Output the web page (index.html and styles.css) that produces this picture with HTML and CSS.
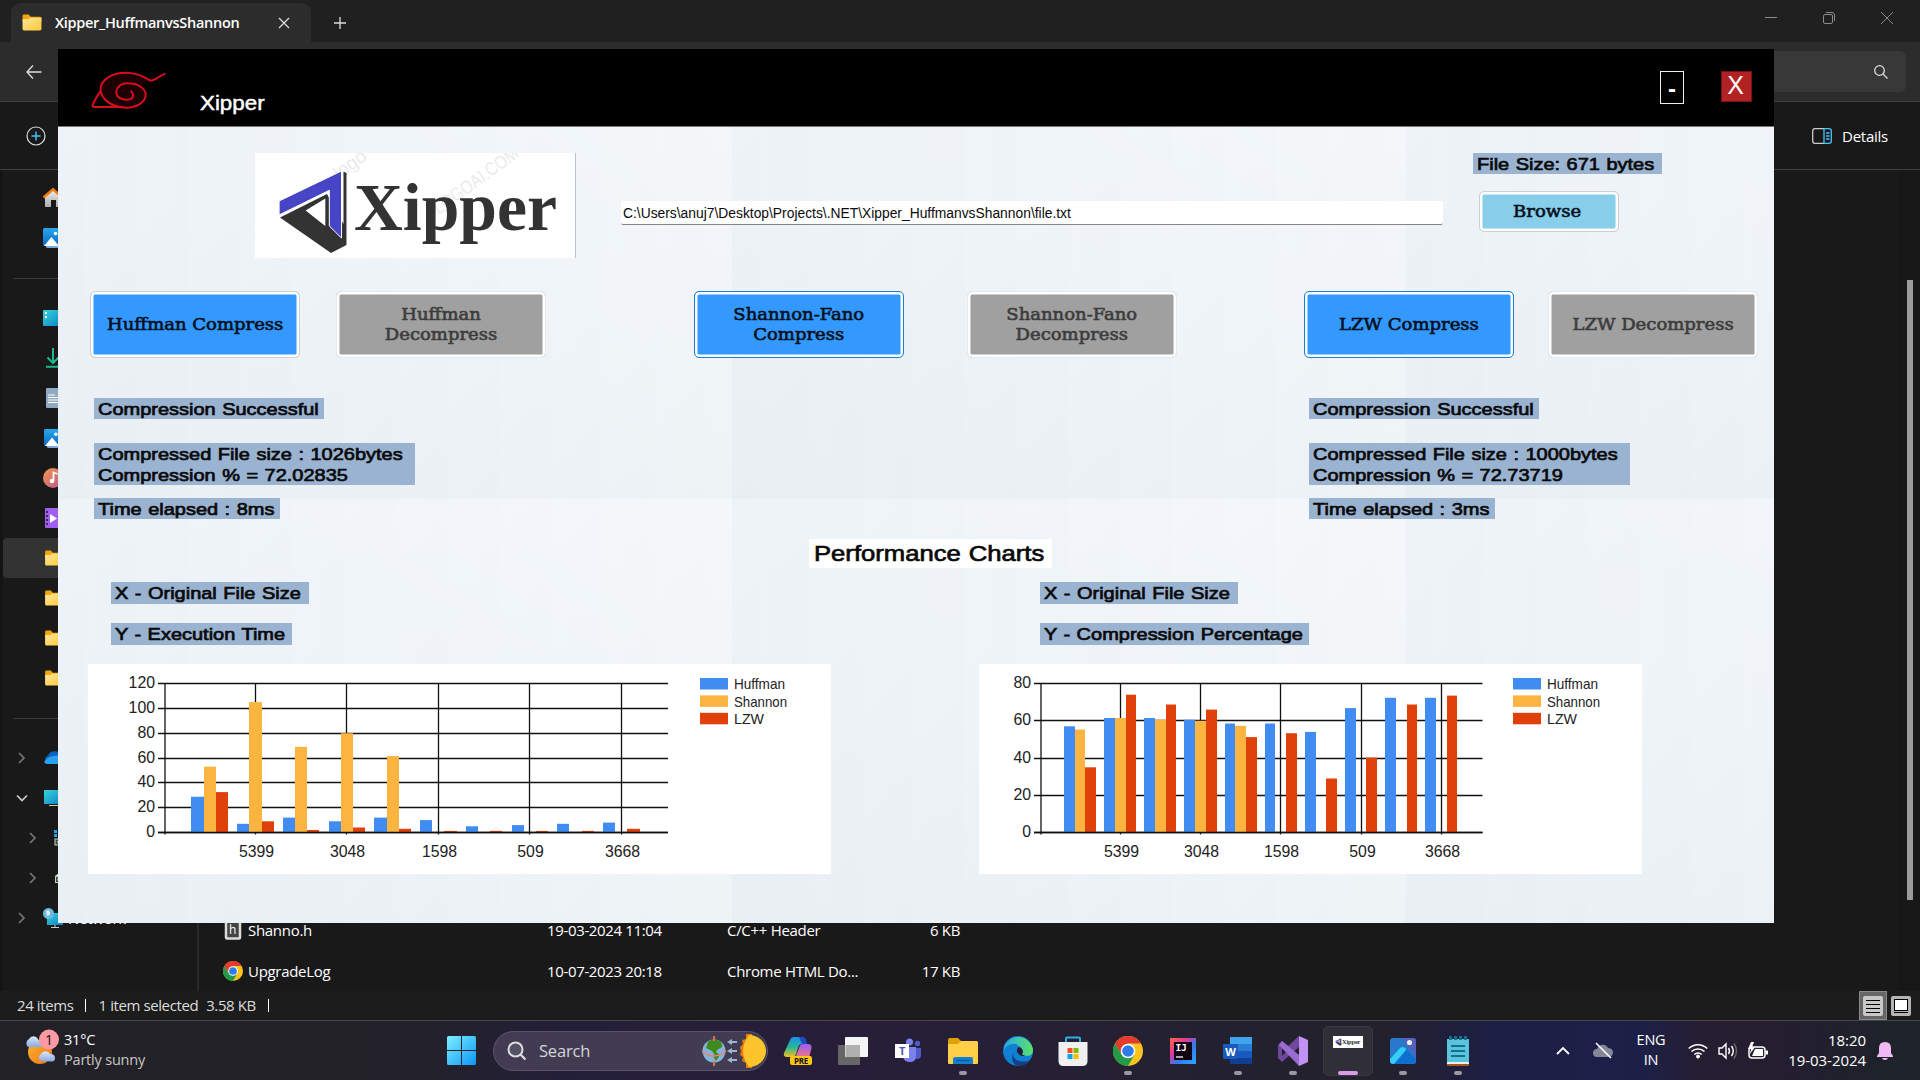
FILE: index.html
```html
<!DOCTYPE html>
<html lang="en">
<head>
<meta charset="utf-8">
<title>Xipper</title>
<link rel="stylesheet" href="styles.css">
</head>
<body>
<svg class="defs" width="0" height="0">
  <defs>
    <linearGradient id="gFolder" x1="0" y1="0" x2="1" y2="1"><stop offset="0" stop-color="#ffe69c"/><stop offset="1" stop-color="#ffc935"/></linearGradient>
    <linearGradient id="gTeal" x1="0" y1="0" x2="1" y2="1"><stop offset="0" stop-color="#35d3dc"/><stop offset="1" stop-color="#0f7fc4"/></linearGradient>
    <linearGradient id="gBlue" x1="0" y1="0" x2="0" y2="1"><stop offset="0" stop-color="#29a7ee"/><stop offset="1" stop-color="#0b69c0"/></linearGradient>
    <linearGradient id="gWin" x1="0" y1="0" x2="1" y2="1"><stop offset="0" stop-color="#7df0ff"/><stop offset="1" stop-color="#0a96f5"/></linearGradient>
    <linearGradient id="gEdge" x1="0" y1="0" x2="1" y2="0"><stop offset="0" stop-color="#2aa8e8"/><stop offset="1" stop-color="#5be36a"/></linearGradient>
    <linearGradient id="gCopA" x1="0" y1="0" x2="0" y2="1"><stop offset="0" stop-color="#1d8fe8"/><stop offset=".5" stop-color="#25b59b"/><stop offset="1" stop-color="#f2c21a"/></linearGradient>
    <linearGradient id="gCopB" x1="0" y1="0" x2="0" y2="1"><stop offset="0" stop-color="#9a5cf5"/><stop offset="1" stop-color="#f2777a"/></linearGradient>
    <linearGradient id="gIJ" x1="0" y1="0" x2="1" y2="1"><stop offset="0" stop-color="#fc6a3a"/><stop offset=".35" stop-color="#e0379b"/><stop offset=".6" stop-color="#2f7cf0"/><stop offset="1" stop-color="#2fa5ff"/></linearGradient>
    <linearGradient id="gSun" x1="0" y1="0" x2="1" y2="1"><stop offset="0" stop-color="#f8b92b"/><stop offset="1" stop-color="#f0701c"/></linearGradient>
    <linearGradient id="gCloud" x1="0" y1="0" x2="0" y2="1"><stop offset="0" stop-color="#dfe9fb"/><stop offset="1" stop-color="#86a9e4"/></linearGradient>
    <linearGradient id="gHome" x1="0" y1="0" x2="0" y2="1"><stop offset="0" stop-color="#eee"/><stop offset="1" stop-color="#aaa"/></linearGradient>
    <linearGradient id="gMusic" x1="0" y1="0" x2="1" y2="1"><stop offset="0" stop-color="#f59b4c"/><stop offset="1" stop-color="#b8518f"/></linearGradient>
    <symbol id="folder" viewBox="0 0 20 18"><path d="M0 2q0-1.500 1.500-1.500h5l2 2.500h10q1.500 0 1.500 1.500V8H0z" fill="#f5a60f"/><path d="M0 5.500h6l2-1.500h12v12q0 1.500-1.500 1.500h-17Q0 17.500 0 16z" fill="url(#gFolder)"/></symbol>
    <symbol id="picture" viewBox="0 0 20 20"><rect x="3" y="16" width="17" height="4" rx="1.500" fill="#7aa9dc"/><rect width="20" height="18" rx="1.500" fill="url(#gBlue)"/><path d="M1 18l7.500-9L16 18z" fill="#fff"/><circle cx="12.500" cy="5.500" r="1.800" fill="#fff"/></symbol>
    <symbol id="chrome" viewBox="0 0 30 30"><circle cx="15" cy="15" r="15" fill="#fcc31e"/><path d="M2 7.500A15 15 0 0 1 28 7.500H15L8.500 18.700z" fill="#e33b2e"/><path d="M2 7.500A15 15 0 0 0 15 30l6.500-11.200L8.500 18.700z" fill="#229a48"/><circle cx="15" cy="15" r="7.300" fill="#fff"/><circle cx="15" cy="15" r="5.800" fill="#2f7bea"/></symbol>
    <symbol id="mark" viewBox="20 14 76 90"><path d="M88.500 18.500l3 1.500v72L76 100 25 64.500 72 41l16.500 30z" fill="#333"/><path d="M24.100 48L86.500 18v67L74.300 73V37.300L24.100 62z" fill="#4545c5" stroke="#fff" stroke-width="1"/><path d="M50.600 57.500L70.300 45.500V73z" fill="#fff"/></symbol>
    <symbol id="chevR" viewBox="0 0 12 12"><path d="M3 1l5 5-5 5" fill="none" stroke="#777" stroke-width="1.700"/></symbol>
  </defs>
</svg>

<div class="desktop">
  <section class="explorer">
    <div class="tabbar">
      <div class="tab">
        <svg width="20" height="17"><use href="#folder"/></svg>
        <span class="tab-title">Xipper_HuffmanvsShannon</span>
        <svg width="12" height="12" class="stroke"><path d="M1 1l10 10M11 1L1 11"/></svg>
      </div>
      <svg class="stroke newtab" width="14" height="14"><path d="M7 1v12M1 7h12"/></svg>
      <div class="winctl">
        <svg width="12" height="12"><path d="M0 5.500h12"/></svg>
        <svg width="12" height="12"><rect x=".5" y="2.500" width="9" height="9" rx="1.500"/><path d="M3 .5h6q2.500 0 2.500 2.500v6"/></svg>
        <svg width="12" height="12"><path d="M0 0l12 12M12 0L0 12"/></svg>
      </div>
    </div>
    <div class="navbar">
      <svg class="stroke" width="16" height="16"><path d="M15.500 8H1M7 1.500L1 8l6 6.500"/></svg>
      <div class="searchbox"><svg class="stroke" width="14" height="14"><circle cx="5.500" cy="5.500" r="4.800"/><path d="M9 9l4.500 4.500"/></svg></div>
    </div>
    <div class="cmdbar">
      <svg width="20" height="20"><circle cx="10" cy="10" r="9" fill="none" stroke="#ddd" stroke-width="1.200"/><path d="M10 5.500v9M5.500 10h9" stroke="#4cc2ff" stroke-width="1.400"/></svg>
      <div class="details">
        <svg width="20" height="16"><path d="M12 .7H3Q.7.700.7 3v10Q.7 15.300 3 15.300h9" fill="none" stroke="#ccc" stroke-width="1.300"/><path d="M12 .7h5q2.300 0 2.300 2.300v10q0 2.300-2.300 2.300h-5zM14 5h3.500M14 8h3.500M14 11h3.500" fill="none" stroke="#4cc2ff" stroke-width="1.300"/></svg>
        <span>Details</span>
      </div>
    </div>
    <div class="body">
      <nav class="side">
        <div class="row"><svg width="20" height="20"><path d="M2 9l8-7 8 7v10h-5v-7H8v7H2z" fill="url(#gHome)"/><path d="M.5 9.500L10 1.300l9.500 8.200" fill="none" stroke="#f07c10" stroke-width="2.600"/></svg></div>
        <div class="row"><svg width="20" height="20"><use href="#picture"/></svg></div>
        <div class="row sep"></div>
        <div class="row"><svg width="20" height="16"><rect width="20" height="16" rx="1" fill="url(#gTeal)"/><path d="M2 2h2v2H2zM2 6h2v2H2z" fill="#fff"/></svg></div>
        <div class="row"><svg width="20" height="20"><path d="M10 0v15M4.500 9.500L10 15l5.500-5.500M3 18.800h14" fill="none" stroke="#1fb88c" stroke-width="2"/></svg></div>
        <div class="row"><svg width="20" height="20"><rect x="3" width="17" height="20" rx="1" fill="#91a9c3"/><path d="M5 7h7M5 9.500h14M5 12h14M5 14.500h14" stroke="#fff" stroke-width="1.200"/></svg></div>
        <div class="row"><svg width="20" height="20"><g transform="translate(1 1)"><use href="#picture" width="19" height="19"/></g></svg></div>
        <div class="row"><svg width="20" height="20"><circle cx="10" cy="10" r="10" fill="url(#gMusic)"/><circle cx="9" cy="13" r="2.300" fill="#fff"/><path d="M10.500 13V4.500l4 1.500" fill="none" stroke="#fff" stroke-width="1.800"/></svg></div>
        <div class="row"><svg width="20" height="20"><rect x="2" width="18" height="20" rx="1" fill="#a05fee"/><path d="M3 3h2v2H3zM3 7h2v2H3zM3 11h2v2H3zM3 15h2v2H3z" fill="#402068"/><path d="M7 6l7 4.500L7 15z" fill="#fff"/></svg></div>
        <div class="row sel"><svg width="20" height="16"><use href="#folder" x="1"/></svg></div>
        <div class="row"><svg width="20" height="16"><use href="#folder" x="1"/></svg></div>
        <div class="row"><svg width="20" height="16"><use href="#folder" x="1"/></svg></div>
        <div class="row"><svg width="20" height="16"><use href="#folder" x="1"/></svg></div>
        <div class="row sep"></div>
        <div class="row"><svg class="chev" width="12" height="12"><use href="#chevR"/></svg><svg width="20" height="14"><path d="M4 13a5 5 0 0 1 1-8.500A7 7 0 0 1 18 5l2 8z" fill="#0a63c2"/><path d="M1 11q5-8 19-6v8H5q-3 0-4-2z" fill="#2aa0ee"/></svg></div>
        <div class="row"><svg class="chev" width="12" height="12"><path d="M1 3.500l5 5 5-5" fill="none" stroke="#ccc" stroke-width="1.700"/></svg><svg width="20" height="16"><rect x="1" width="19" height="14" fill="url(#gTeal)"/><path d="M6 15.500h10" stroke="#ccc"/></svg></div>
        <div class="row deep"><svg class="chev" width="12" height="12"><use href="#chevR"/></svg><svg width="20" height="18"><path d="M0 1h3v3H0zM4 1h3v3H4zM0 5h3v3H0zM4 5h3v3H4z" fill="#1fa5ef"/><rect x="1" y="10" width="18" height="6" fill="#444" stroke="#ccc"/><path d="M3 13h3" stroke="#4fd35a" stroke-width="2"/></svg></div>
        <div class="row deep"><svg class="chev" width="12" height="12"><use href="#chevR"/></svg><svg width="20" height="12"><path d="M1 4l4-3h10l4 3z" fill="#ddd"/><rect x="1.500" y="4.500" width="17" height="6" fill="#444" stroke="#ccc"/><path d="M3 7.500h3" stroke="#4fd35a" stroke-width="2"/></svg></div>
        <div class="row"><svg class="chev" width="12" height="12"><use href="#chevR"/></svg><svg width="20" height="20"><rect x="4" y="5" width="16" height="12" fill="url(#gTeal)"/><path d="M8 19.500h8M12 17v2" stroke="#ccc"/><circle cx="5.500" cy="5.500" r="5.500" fill="#6db9dc"/><path d="M3 3q3-2 4 1T4 8z" fill="#d5f0f8"/></svg><span class="net">Network</span></div>
      </nav>
      <div class="files">
        <div class="file"><svg width="20" height="20"><rect x="3" y=".5" width="14" height="18" rx="1" fill="#444" stroke="#ddd" stroke-width="2.500"/></svg><span class="hmark">h</span><span class="c1">Shanno.h</span><span class="c2">19-03-2024 11:04</span><span class="c3">C/C++ Header</span><span class="c4">6 KB</span></div>
        <div class="file"><svg width="20" height="20"><use href="#chrome"/></svg><span class="c1">UpgradeLog</span><span class="c2">10-07-2023 20:18</span><span class="c3">Chrome HTML Do...</span><span class="c4">17 KB</span></div>
      </div>
      <div class="scroll"><i></i></div>
    </div>
    <div class="status">
      <span>24 items</span><i></i><span>1 item selected</span><span class="kb">3.58 KB</span><i></i>
      <div class="views">
        <div class="view on"><svg width="20" height="20"><rect width="20" height="20" rx="2" fill="#c8c8c8"/><path d="M3 4.500h14M3 8.500h14M3 12.500h14M3 16.500h14" stroke="#000"/></svg></div>
        <svg width="20" height="20"><rect width="20" height="20" rx="2" fill="#b5b5b5"/><rect x="3.500" y="3.500" width="13" height="11" fill="#fff" stroke="#000"/><path d="M3 16.500h14" stroke="#000"/></svg>
      </div>
    </div>
  </section>

  <footer class="taskbar">
    <div class="weather">
      <svg width="34" height="38"><circle cx="15" cy="23" r="12" fill="url(#gSun)"/><path d="M3 18a5 5 0 0 1 1-8 5 5 0 0 1 9 0l4 8z" fill="url(#gCloud)"/><path d="M16 32a4 4 0 0 1 0-7 5 5 0 0 1 9 0q5 0 5 4t-4 3.500z" fill="url(#gCloud)"/><circle cx="24" cy="10.500" r="10" fill="#ff99a4"/><text x="24" y="15.500" text-anchor="middle" font-size="14" fill="#111">1</text></svg>
      <div><p>31°C</p><p class="dim">Partly sunny</p></div>
    </div>
    <svg class="start" width="29" height="29"><path d="M0 1.500Q0 0 1.500 0H14v14H0zM15 0h12.500Q29 0 29 1.500V14H15zM0 15h14v14H1.500Q0 29 0 27.500zM15 15h14v12.500q0 1.500-1.500 1.500H15z" fill="url(#gWin)"/></svg>
    <div class="tsearch">
      <svg width="20" height="20"><circle cx="8.500" cy="8.500" r="7" fill="#555166" stroke="#ddd" stroke-width="2"/><path d="M13.500 13.500l5 5" stroke="#ddd" stroke-width="2.200"/></svg>
      <span>Search</span>
      <svg class="equinox" width="64" height="34"><circle cx="12" cy="17" r="11.500" fill="#84b4dd"/><path d="M6 8q4-4 9-2 6 2 5 7l-5 3-2 5-3-4-6-3zM14 18l4 3-4 6-3-5z" fill="#3f8a1c"/><path d="M0 17q12 10 24 0" fill="none" stroke="#f0816b" stroke-width="1.500"/><path d="M12 2v5M12 27v5" stroke="#e8694f" stroke-width="2"/><path d="M35 8H27M35 17H27M35 26H27" stroke="#9fb4d4" stroke-width="2.200"/><path d="M25 8l5-3v6zM25 17l5-3v6zM25 26l5-3v6z" fill="#9fb4d4"/><path d="M44 0h6v34h-6l0-5-4-2 1-4-3-2 1-4-1-4 3-3-1-4 4-1z" fill="#e87b0e"/><path d="M47 1a17 16 0 0 1 0 32Q35 17 47 1z" fill="#fcc52b"/></svg>
    </div>
    <div class="apps">
      <div class="app"><svg width="30" height="30"><path d="M7 4q1-3 4-3h8q3 0 4 4l1 3h-5q-3 0-4 4l-2 6q-1 3-4 3H4q-4 0-3-4z" fill="url(#gCopA)"/><path d="M16 1h3q3 0 4 4l1 3h-5z" fill="#1f48c8"/><path d="M16 12q1-4 4-4h5q4 0 3.500 4L26 22H12z" fill="url(#gCopB)"/><rect x="7" y="20" width="22" height="9" rx="2" fill="#fbc617"/><text x="18" y="27.500" text-anchor="middle" font-size="8" font-weight="700" fill="#111">PRE</text></svg></div>
      <div class="app"><svg width="30" height="30"><rect x="0" y="9" width="22" height="20" rx="1" fill="#666"/><rect x="7" y="1" width="23" height="20" rx="1" fill="#f4f4f4"/><path d="M7.500 9H22v12H7.500z" fill="#b0b0b0"/></svg></div>
      <div class="app"><svg width="30" height="30"><circle cx="16.500" cy="6" r="3.500" fill="#7b83eb"/><circle cx="24.500" cy="7.500" r="2.700" fill="#5059c9"/><path d="M20 12h8v7q0 4-4 4t-4-3z" fill="#5059c9"/><path d="M10 11h13v9q0 6-6 6t-7-5z" fill="#7b83eb"/><rect x="2" y="8" width="14" height="14" fill="#fff"/><text x="9" y="19" text-anchor="middle" font-size="11" font-weight="700" fill="#4b53bc">T</text></svg></div>
      <div class="app run"><svg width="30" height="30"><path d="M0 4q0-2 2-2h8l3 3h15q2 0 2 2v4H0z" fill="#dfa009"/><path d="M0 8h10l3-3h15q2 0 2 2v20q0 1-1 1H1q-1 0-1-1z" fill="#ffcf48"/><path d="M5 28v-5q0-2 2-2h16q2 0 2 2v5z" fill="#137fd0"/><path d="M8 24.500h14" stroke="#0b5ca8" stroke-width="1.500"/></svg></div>
      <div class="app"><svg width="30" height="30"><circle cx="15" cy="15" r="15" fill="#1180d4"/><path d="M1 11A15 15 0 0 1 30 14q0 6-7 6-5 0-4.500-2 2-2 0-5Q15 7 9 8t-8 6z" fill="url(#gEdge)"/><path d="M10 17q0 9 12 8.500 4 0 6-2.500Q23 30 15 30 7 28 10 17z" fill="#123f86"/><path d="M19 20q-6-2-5-7 2-4 5 0 2 3 0 5 0 1 4 2z" fill="#221f33"/></svg></div>
      <div class="app"><svg width="30" height="30"><path d="M8 6V2.500q0-.9 1-.9h12q1 0 1 .9V6" fill="none" stroke="#2bb0e8" stroke-width="2"/><path d="M.5 6h29v19q0 5-5 5h-19q-5 0-5-5z" fill="#f0f0f0"/><path d="M9.500 12h5v5h-5z" fill="#f25022"/><path d="M15.500 12h5v5h-5z" fill="#7fba00"/><path d="M9.500 18h5v5h-5z" fill="#00a4ef"/><path d="M15.500 18h5v5h-5z" fill="#ffb900"/></svg></div>
      <div class="app run"><svg width="30" height="30"><use href="#chrome"/></svg></div>
      <div class="app"><svg width="30" height="30"><rect x="2" y="2" width="26" height="26" fill="url(#gIJ)"/><rect x="6" y="6" width="18" height="18" fill="#100412"/><text x="7.500" y="15" font-size="9.500" font-weight="700" fill="#fff" class="mono">IJ</text><path d="M8 21h7" stroke="#fff" stroke-width="1.300"/></svg></div>
      <div class="app run"><svg width="30" height="30"><path d="M7 1h22v7H7z" fill="#41a5ee"/><path d="M7 8h22v7H7z" fill="#2b7cd3"/><path d="M7 15h22v7H7z" fill="#185abd"/><path d="M7 22h22v6H7z" fill="#103f91"/><rect y="8" width="15" height="15" rx="1" fill="#185abd"/><text x="7.500" y="19.500" text-anchor="middle" font-size="11" font-weight="700" fill="#fff">W</text></svg></div>
      <div class="app run"><svg width="30" height="30"><path d="M0 9l4-4 6 5 11-10v11L4 26l-4-4z" fill="#6f489e"/><path d="M4 12v8l4-4z" fill="#23202c"/><path d="M4 5l17 14v11L1 9z" fill="#9a6bd0"/><path d="M21 0l9 4v22l-9 4z" fill="#c291f5"/></svg></div>
      <div class="app run active"><svg width="30" height="30"><rect width="30" height="12" fill="#fff"/><use href="#mark" x="2" y="2" width="7" height="8"/><text x="9" y="8" font-size="6.500" font-weight="700" fill="#333" class="serif">Xipper</text></svg></div>
      <div class="app run"><svg width="30" height="30"><rect x="2" y="2" width="26" height="26" rx="3" fill="#2a78cc"/><path d="M14 2h11q3 0 3 3v15z" fill="#5560bd"/><path d="M2 23l10-11q2.500-2 5 0l11 11v2q0 3-3 3H5q-3 0-3-3z" fill="#0f6fcf"/><path d="M2 23l10-11q2.500-2 5 0l1.500 1.500L6 28q-4 0-4-3z" fill="#35cdf5"/><circle cx="21.500" cy="6.500" r="2.600" fill="#eee"/></svg></div>
      <div class="app run"><svg width="30" height="30"><path d="M4 3h22v24H4z" fill="#5cc3dc"/><path d="M4 26h22v2H4z" fill="#eee"/><path d="M4 28h22v2H4z" fill="#a4561f"/><path d="M8 10h14M8 15h14M8 20h14" stroke="#13708a" stroke-width="2"/><path d="M7.500 0v4M12.500 0v4M17.500 0v4M22.500 0v4" stroke="#13708a" stroke-width="3"/></svg></div>
    </div>
    <div class="tray">
      <svg width="14" height="9"><path d="M1 8l6-6 6 6" fill="none" stroke="#fff" stroke-width="1.800"/></svg>
      <svg class="cloud" width="20" height="18"><path d="M4 15a4 4 0 0 1 0-8 6 6 0 0 1 11-1 4.500 4.500 0 0 1 1 9z" fill="#86869a"/><path d="M3 1l15 15" stroke="#fff" stroke-width="1.500"/></svg>
      <div class="lang"><p>ENG</p><p>IN</p></div>
      <svg class="wifi" width="20" height="16"><path d="M.8 5.500a13 13 0 0 1 18.400 0M3.500 8.500a9.500 9.500 0 0 1 13 0M6.300 11.500a5.500 5.500 0 0 1 7.400 0" fill="none" stroke="#fff" stroke-width="1.600"/><circle cx="10" cy="13.500" r="1.900" fill="#fff"/></svg>
      <svg class="vol" width="20" height="18"><path d="M1 6h3l4-4v14l-4-4H1z" fill="none" stroke="#fff" stroke-width="1.400"/><path d="M10.500 6q2 3 0 6M13.500 4q3.500 5 0 10" fill="none" stroke="#fff" stroke-width="1.400"/><path d="M16 1.500q5 7.500 0 15" fill="none" stroke="#666" stroke-width="1.400"/></svg>
      <svg class="batt" width="20" height="18"><rect x="1" y="5" width="16" height="11" rx="3" fill="none" stroke="#fff" stroke-width="1.500"/><path d="M7 7h8v7H4zM17.500 8.500H20v4h-2.500z" fill="#fff"/><path d="M3 0L0 7h3L2 12l5-7H4l2-5z" fill="#fff"/></svg>
      <div class="clock"><p>18:20</p><p>19-03-2024</p></div>
      <svg class="bell" width="16" height="20"><path d="M0 15l2-3V7q0-6 6-6t6 6v5l2 3v1H0z" fill="#f0b9f3"/><path d="M5 17h6q-.5 2-3 2t-3-2z" fill="#f0b9f3"/></svg>
    </div>
  </footer>

  <main class="window">
    <header class="titlebar">
      <svg class="spiral" width="85" height="50"><path d="M45.600 25.700C49 29 49 33 45 34.300C37 36 31 32 31.300 27C32 21 37 18 43 18.300C54 18.500 60.700 24 60.700 30C60 38 51 43 41 42.700C26 42 15.500 34 15.500 24C16 14 28 7.500 41.500 7.700C53 8 60 12 65 15.500C69 16.500 73 12 80.300 8.300" fill="#1c0004" stroke="#d90d1e" stroke-width="2"/><path d="M16 26q-4 4-8.500 14.500 0 2 4 1.500h25" fill="none" stroke="#d90d1e" stroke-width="2"/></svg>
      <h1><span class="wide">Xipper</span></h1>
      <button class="min">-</button>
      <button class="close">X</button>
    </header>
    <div class="top">
      <svg class="logo" width="321" height="105">
        <rect width="321" height="105" fill="#fff"/>
        <g fill="#ebebeb" class="wm"><text transform="translate(84 27) rotate(-36)">logo</text><text transform="translate(184 62) rotate(-36)" textLength="100" lengthAdjust="spacingAndGlyphs">LOGOAI.COM</text></g>
        <use href="#mark" x="20" y="14" width="76" height="90"/>
        <text x="99" y="77" font-size="67" font-weight="700" fill="#333" class="serif" textLength="203" lengthAdjust="spacingAndGlyphs">Xipper</text>
        <path d="M320.500 0v105" stroke="#b0c4de"/>
      </svg>
      <div class="path"><span>C:\Users\anuj7\Desktop\Projects\.NET\Xipper_HuffmanvsShannon\file.txt</span></div>
      <div class="pick">
        <div class="label w189"><span class="wide">File Size: 671 bytes</span></div>
        <button class="btn browse"><span>Browse</span></button>
      </div>
    </div>
    <div class="buttons">
      <button class="btn g0"><span>Huffman Compress</span></button>
      <button class="btn off g1"><span>Huffman<br>Decompress</span></button>
      <button class="btn focus g2"><span>Shannon-Fano<br>Compress</span></button>
      <button class="btn off g3"><span>Shannon-Fano<br>Decompress</span></button>
      <button class="btn focus g4"><span>LZW Compress</span></button>
      <button class="btn off g5"><span>LZW Decompress</span></button>
    </div>
    <div class="results">
      <div class="col">
        <div class="label w230"><span class="wide">Compression Successful</span></div>
        <div class="label big"><span class="wide">Compressed File size : 1026bytes<br>Compression % = 72.02835</span></div>
        <div class="label w186"><span class="wide">Time elapsed : 8ms</span></div>
      </div>
      <div class="col">
        <div class="label w230"><span class="wide">Compression Successful</span></div>
        <div class="label big"><span class="wide">Compressed File size : 1000bytes<br>Compression % = 72.73719</span></div>
        <div class="label w186"><span class="wide">Time elapsed : 3ms</span></div>
      </div>
    </div>
    <h2><span class="wide">Performance Charts</span></h2>
    <div class="notes">
      <div class="ncol"><div class="label w198"><span class="wide">X - Original File Size</span></div><div class="label w181"><span class="wide">Y - Execution Time</span></div></div>
      <div class="ncol"><div class="label w198"><span class="wide">X - Original File Size</span></div><div class="label w269"><span class="wide">Y - Compression Percentage</span></div></div>
    </div>
    <div class="charts">
      <svg id="time" class="chart" width="743" height="210"></svg>
      <svg id="ratio" class="chart" width="663" height="210"></svg>
    </div>
  </main>
</div>
<script src="chart.js"></script>
</body>
</html>
```
FILE: styles.css
```css
* { box-sizing: border-box; }
body { margin: 0; background: #191919; font-family: "Open Sans", "Noto Sans", sans-serif; }
p, h1, h2 { margin: 0; }
button { padding: 0; font: inherit; }
svg { display: block; flex: none; }
svg text { font-family: "Open Sans", sans-serif; }
svg text.serif { font-family: "Liberation Serif", serif; }
svg text.mono { font-family: "DejaVu Sans Mono", monospace; }
.defs { position: absolute; }
.desktop { position: relative; width: 1920px; height: 1080px; overflow: hidden; display: flex; flex-direction: column; }
.stroke { fill: none; stroke: #ddd; stroke-width: 1.3; }

/* file explorer */
.explorer { height: 1021px; flex: none; display: flex; flex-direction: column; color: #fff; font-size: 15px; letter-spacing: -0.25px; border-bottom: 1px solid #46464a; }
.tabbar { height: 42px; background: #202020; display: flex; align-items: center; padding-left: 11px; }
.tab { width: 300px; height: 39px; margin-top: 3px; background: #2c2c2c; border-radius: 9px 9px 0 0; display: flex; align-items: center; padding: 0 21px 0 11px; }
.tab-title { margin-left: 13px; font-size: 14.5px; font-weight: 600; letter-spacing: -0.28px; flex: 1; }
.newtab { margin-left: 22px; margin-top: 4px; }
.winctl { margin-left: auto; margin-right: 27px; margin-bottom: 6px; display: flex; gap: 46px; fill: none; stroke: #8a8a8a; }
.navbar { height: 60px; background: #2c2c2c; border-bottom: 1px solid #3f3f3f; display: flex; align-items: center; justify-content: space-between; padding: 0 14px 0 26px; }
.searchbox { width: 400px; height: 41px; background: #383838; border-radius: 6px; display: flex; align-items: center; justify-content: flex-end; padding-right: 18px; }
.cmdbar { height: 68px; background: #191919; border-bottom: 1px solid #3f3f3f; display: flex; align-items: center; justify-content: space-between; padding: 0 32px 0 26px; }
.details { display: flex; align-items: center; gap: 10px; }
.body { flex: 1; min-height: 0; display: flex; background: #191919; }
.side { width: 199px; padding-top: 8px; border-left: 3px solid #141414; border-right: 2px solid #292929; }
.row { height: 40px; display: flex; align-items: center; padding-left: 40px; position: relative; }
.row.sel { background: #333; border-radius: 4px; }
.row.sep { padding: 0; }
.row.sep::before { content: ""; height: 1px; margin-left: 10px; flex: 1; background: #3a3a3a; }
.row .chev { margin-left: -27px; margin-right: 15px; }
.row.deep .chev { margin-left: -16px; margin-right: 15px; }
.net { margin-left: 5px; }
.files { flex: 1; display: flex; flex-direction: column; justify-content: flex-end; }
.file { height: 41px; display: flex; align-items: center; padding-left: 24px; position: relative; }
.hmark { position: absolute; left: 30px; font-size: 12px; }
.c1 { width: 299px; margin-left: 5px; letter-spacing: -0.3px; }
.c2 { width: 180px; letter-spacing: -0.35px; }
.c3 { width: 150px; letter-spacing: -0.3px; }
.c4 { width: 83px; text-align: right; letter-spacing: -0.35px; }
.scroll { width: 22px; padding: 110px 0 0 9px; background: #171717; }
.scroll i { display: block; width: 6px; height: 620px; background: #9b9b9b; }
.status { height: 29px; background: #1c1c1c; display: flex; align-items: center; padding-left: 17px; color: #ddd; letter-spacing: -0.4px; }
.status span { margin-top: -2px; }
.status i { width: 1px; height: 13px; background: #fff; margin: 0 12px; }
.status .kb { margin-left: 8px; }
.views { margin-left: auto; margin-right: 9px; display: flex; align-items: center; gap: 4px; }
.view.on { width: 28px; height: 29px; background: #666; border: 1px solid #8a8a8a; display: grid; place-items: center; }

/* taskbar */
.taskbar { height: 59px; display: flex; align-items: center; color: #fff; font-size: 14.5px; letter-spacing: -0.2px; background: linear-gradient(90deg, #222126 0, #232129 400px, #241f38 560px, #271e38 900px, #232130 1200px, #23212c 1380px, #1d1e46 1500px, #1c2047 1640px, #261e32 1700px, #241e30 1780px, #1e222b 1880px); }
.weather { display: flex; width: 447px; padding-left: 25px; gap: 5px; align-items: center; line-height: 20px; }
.weather svg { margin-top: -6px; }
.weather div { margin-top: -2px; }
.weather .dim { color: #c8c8c8; }
.tsearch { width: 275px; height: 40px; margin-left: 17px; border-radius: 20px; background: #413c51; border: 1px solid #59546a; display: flex; align-items: center; padding-left: 13px; font-size: 16.5px; color: #d6d4dc; }
.tsearch span { margin-left: 12px; flex: 1; }
.equinox { margin-right: 1px; }
.apps { display: flex; gap: 5px; margin-left: 5px; }
.app { width: 50px; height: 50px; border-radius: 5px; display: grid; place-items: center; position: relative; }
.app.run::after { content: ""; position: absolute; left: 21px; bottom: 1px; width: 8px; height: 4px; border-radius: 2px; background: #9b97a3; }
.app.active { background: #302f38; border: 1px solid #3a3942; }
.app.active::after { left: 14px; bottom: 0; width: 20px; background: #d99be6; }
.tray { flex: 1; display: flex; align-items: center; line-height: 20px; }
.tray > svg:first-child { margin-left: 73px; }
.tray .cloud { margin-left: 23px; }
.lang { width: 40px; margin-left: 18px; text-align: center; }
.wifi { margin-left: 17px; }
.vol { margin-left: 10px; }
.batt { margin-left: 10px; }
.clock { width: 98px; text-align: right; font-size: 15px; letter-spacing: -0.05px; }
.tray .lang, .tray .clock { margin-top: -1px; }
.bell { margin-left: 11px; }

/* Xipper window */
.window { position: absolute; left: 58px; top: 49px; width: 1716px; height: 874px; display: flex; flex-direction: column; color: #0a0a0a;
  background: linear-gradient(90deg, rgba(228,235,240,.25), rgba(255,255,255,.2)) 0 0 / 674px 450px, linear-gradient(180deg, #f2f6fa, #eaf0f4) 0 0 / 674px 450px;
  font-family: "Liberation Sans", Arial, sans-serif; }
.wide { display: inline-block; transform: scaleX(1.175); transform-origin: 0 50%; white-space: nowrap; word-spacing: 0.8px; -webkit-text-stroke: 0.7px currentColor; }
.titlebar { height: 78px; flex: none; background: #000; border-bottom: 1px solid #777; display: flex; align-items: flex-start; color: #fff; }
.spiral { margin: 16px 0 0 27px; }
h1 { margin: 42px 0 0 30px; font-size: 20.5px; line-height: 24px; font-weight: 400; flex: 1; }
h1 .wide { transform: scaleX(1.09); -webkit-text-stroke-width: 0.45px; }
.min { width: 24px; height: 33px; margin-top: 22px; background: #000; color: #fff; border: 1px solid #eee; font-size: 24px; font-weight: 700; line-height: 28px; padding-top: 2px; }
.close { width: 31px; height: 31px; margin: 22px 22px 0 37px; background: #b22222; border: 1px solid #7a1010; color: #fff; font-size: 25px; line-height: 27px; padding: 0 2px 2px 0; }
.top { height: 164px; flex: none; display: flex; align-items: flex-start; }
.logo { margin: 26px 0 0 197px; }
.wm text { font-family: "Liberation Sans", sans-serif; font-size: 19px; }
.path { width: 822px; height: 24px; margin: 74px 0 0 45px; background: #fff; border-bottom: 1px solid #858585; border-radius: 2px; font-size: 15.3px; line-height: 23px; padding-left: 2px; }
.path span { display: inline-block; transform: scaleX(.904); transform-origin: 0 50%; white-space: nowrap; }
.pick { margin: 26px 0 0 30px; }
.label { height: 21px; padding-left: 4px; background: #9ab3d1; font-size: 17px; line-height: 21px; }
.label .wide { position: relative; top: 1px; }
.w181 { width: 181px; } .w186 { width: 186px; } .w189 { width: 189px; } .w198 { width: 198px; } .w230 { width: 230px; } .w269 { width: 269px; }
.label.big { width: 321px; height: 42px; margin: 24px 0 13px; }
.btn { width: 210px; height: 67px; flex: none; border: 1px solid #cfcfcf; border-radius: 5px; background: #3399ff; background-clip: padding-box; box-shadow: inset 0 0 0 2.5px #fdfdfd; font: 17px/20px "DejaVu Serif", serif; color: #06101c; display: grid; place-items: center; padding-bottom: 2px; -webkit-text-stroke: 0.6px currentColor; }
.btn span { display: block; white-space: nowrap; transform: scaleX(1.06); }
.btn.focus { border-color: #1a80d4; }
.btn.off { background: #a0a0a0; border-color: #e8eaec; color: #3c3c3c; }
.btn.browse { width: 140px; height: 41px; margin: 17px 0 0 6px; padding-right: 4px; background-color: #87ceeb; }
.buttons { display: flex; height: 67px; flex: none; }
.g0 { margin-left: 32px; } .g1 { margin-left: 36px; } .g2 { margin-left: 148px; } .g3 { margin-left: 63px; } .g4 { margin-left: 127px; } .g5 { margin-left: 34px; }
.results { display: flex; justify-content: space-between; margin: 40px 144px 0 36px; }
h2 { width: 243px; height: 29px; flex: none; margin: 20px 0 0 751px; padding-left: 5px; background: #fff; font-size: 22px; line-height: 29px; font-weight: 400; }
h2 .wide { transform: scaleX(1.165); }
.notes { display: grid; grid-template-columns: 929px auto; margin: 14px 0 0 53px; }
.notes .label { height: 22px; }
.notes .label + .label { margin-top: 19px; }
.charts { display: flex; gap: 148px; margin: 19px 0 0 30px; }
.chart { background: #fff; }
svg.chart text { font-family: "Liberation Sans", sans-serif; font-size: 16.5px; fill: #222; }
svg.chart text.key { font-size: 15px; }
```
FILE: chart.js
```js
const COLORS = ['#418cf0', '#fcb441', '#e0400a'];
const NAMES = ['Huffman', 'Shannon', 'LZW'];
const KEY_WIDTHS = [51, 53, 30];
const TICKS = { 2: '5399', 4: '3048', 6: '1598', 8: '509', 10: '3668' };
const TOP = 19.5, BASE = 168.5;

function drawChart(id, o) {
  const step = (o.right - o.left) / 11;
  const y = v => BASE - v * (BASE - TOP) / o.max;
  const line = (x1, y1, x2, y2) => `<path d="M${x1} ${y1}L${x2} ${y2}" stroke="#111" stroke-width="1.300"/>`;
  let s = '';
  for (let v = 0; v <= o.max; v += 20) {
    const gy = Math.floor(y(v)) + 0.5;
    const label = String(v);
    s += line(o.left - 7, gy, o.right, gy);
    s += `<text x="${o.left - 10}" y="${gy + 4.500}" text-anchor="end" textLength="${label.length * 8.800}" lengthAdjust="spacingAndGlyphs">${label}</text>`;
  }
  s += line(o.left, TOP, o.left, BASE + 2);
  for (const k in TICKS) {
    const x = Math.floor(o.left + k * step) - 0.5;
    s += line(x, TOP, x, BASE + 2);
    s += `<text x="${x + 1}" y="193" text-anchor="middle" textLength="${TICKS[k].length * 8.800}" lengthAdjust="spacingAndGlyphs">${TICKS[k]}</text>`;
  }
  const w = step * 0.8 / 3;
  o.data.forEach((series, j) => series.forEach((v, i) => {
    const x = Math.round(o.left + (i + 1) * step + (j - 1.5) * w - 1);
    const x2 = Math.round(o.left + (i + 1) * step + (j - 0.5) * w - 1);
    s += `<rect x="${x}" y="${y(v).toFixed(1)}" width="${x2 - x}" height="${(BASE - y(v)).toFixed(1)}" fill="${COLORS[j]}"/>`;
  }));
  s += line(o.left - 7, BASE, o.right, BASE);
  NAMES.forEach((n, i) => {
    const ky = 14 + i * 17.4;
    s += `<rect x="${o.key}" y="${ky}" width="28" height="11.500" fill="${COLORS[i]}"/>`;
    s += `<text class="key" x="${o.key + 34}" y="${ky + 11.300}" textLength="${KEY_WIDTHS[i]}" lengthAdjust="spacingAndGlyphs">${n}</text>`;
  });
  document.getElementById(id).innerHTML = s;
}

drawChart('time', { left: 77, right: 580, max: 120, key: 612, data: [
  [28.8, 7, 12, 9, 12, 10, 5, 6, 7, 8],
  [53, 105, 69, 80, 61.5],
  [32.5, 9, 2, 4, 3, 1.3, 1.3, 1.3, 1.3, 3]
] });
drawChart('ratio', { left: 62, right: 503.5, max: 80, key: 534, data: [
  [57, 61.5, 61.5, 60.5, 58.5, 58.5, 54, 66.8, 72.3, 72.3],
  [55.3, 61.5, 60.5, 60, 57.3],
  [35, 74, 68.7, 66, 51.2, 53.3, 29, 40.2, 68.7, 73.5]
] });
```
